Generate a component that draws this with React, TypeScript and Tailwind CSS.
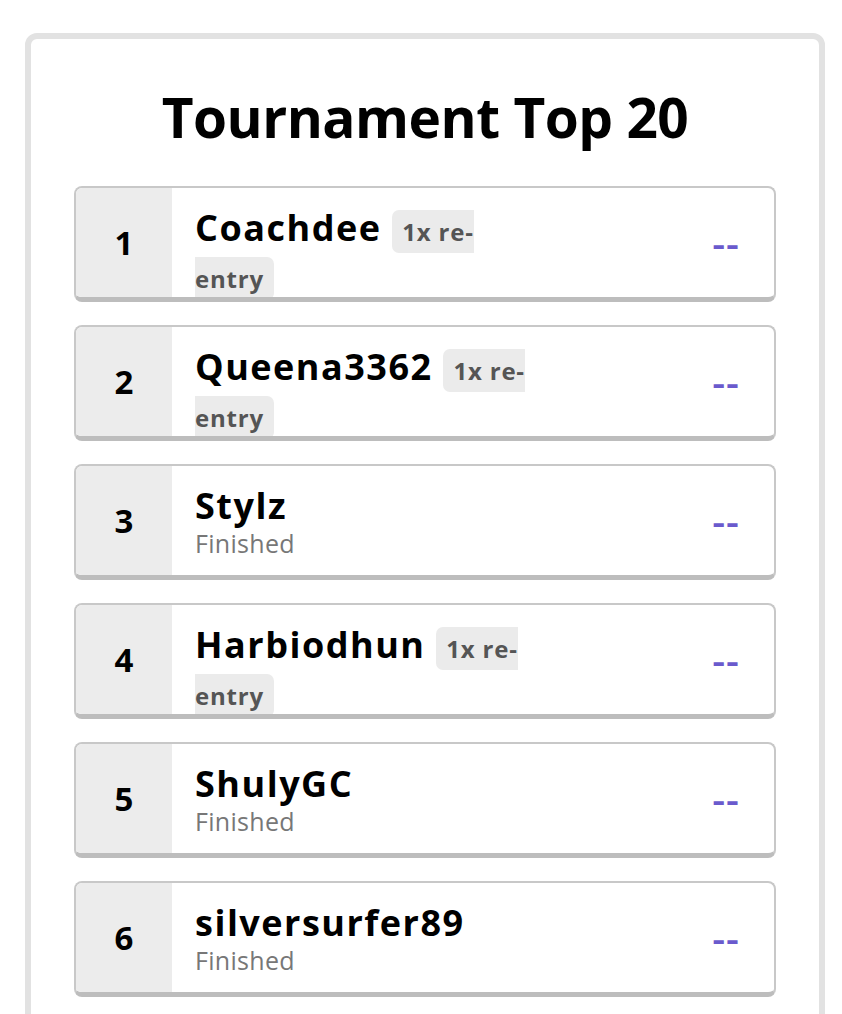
const players = [
  { rank: 1, name: "Coachdee", reentry: true },
  { rank: 2, name: "Queena3362", reentry: true },
  { rank: 3, name: "Stylz", reentry: false },
  { rank: 4, name: "Harbiodhun", reentry: true },
  { rank: 5, name: "ShulyGC", reentry: false },
  { rank: 6, name: "silversurfer89", reentry: false },
];

const PlayerRow = ({ rank, name, reentry }: { rank: number; name: string; reentry: boolean }) => (
  <div className="flex h-[116px] overflow-hidden rounded-[8px] border-2 border-b-[5px] border-[#c8c8c8] border-b-[#bdbdbd] bg-white">
    <div className="flex w-[96px] shrink-0 items-center justify-center bg-[#ececec] text-[33px] font-bold text-black">
      {rank}
    </div>
    <div className="flex-1 pl-[23px] pt-[18px]">
      <div className="w-[341px] text-[36px] font-bold leading-[43px] tracking-[1.5px] text-black">
        {name}
        {reentry && (
          <>
            {" "}
            <span className="rounded-[7px] bg-[#ebebeb] px-[10px] py-[5px] text-[24px] font-bold tracking-[0.8px] text-[#555555]">
              1x re-entry
            </span>
          </>
        )}
      </div>
      {!reentry && <div className="text-[25px] leading-[33px] tracking-[0.3px] text-[#777777]">Finished</div>}
    </div>
    <div className="flex items-center pr-[34px] text-[40px] font-semibold leading-none tracking-[1px] text-[#6a5acd]">--</div>
  </div>
);

export default function App() {
  return (
    <div className="min-h-screen bg-white pl-[25px] pt-[33px]" style={{ fontFamily: "'Open Sans', 'Noto Sans', sans-serif" }}>
      <div className="w-[800px] rounded-[12px] border-[6px] border-[#e2e2e2] px-[43px] pb-[40px] pt-[46px]">
        <h1 className="mb-[37px] text-center text-[55px] font-bold leading-[64px] tracking-[-0.5px] text-black">Tournament Top 20</h1>
        <div className="flex flex-col gap-[23px]">
          {players.map((p) => (
            <PlayerRow key={p.rank} {...p} />
          ))}
        </div>
      </div>
    </div>
  );
}
